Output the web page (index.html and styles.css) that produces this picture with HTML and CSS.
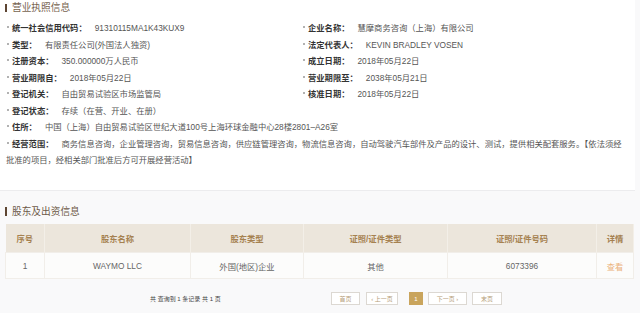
FILE: index.html
```html
<!DOCTYPE html>
<html>

<head>
    <meta charset="utf-8">
    <link rel="stylesheet" href="styles.css">
</head>

<body>
    <div class="panel license">
        <h2 class="section-title">营业执照信息</h2>
        <div class="info-grid">
            <div class="item"><span class="label">统一社会信用代码：</span><span class="value">91310115MA1K43KUX9</span></div>
            <div class="item"><span class="label">企业名称：</span><span class="value">慧摩商务咨询（上海）有限公司</span></div>
            <div class="item"><span class="label">类型：</span><span class="value">有限责任公司(外国法人独资)</span></div>
            <div class="item"><span class="label">法定代表人：</span><span class="value">KEVIN BRADLEY VOSEN</span></div>
            <div class="item"><span class="label">注册资本：</span><span class="value">350.000000万人民币</span></div>
            <div class="item"><span class="label">成立日期：</span><span class="value">2018年05月22日</span></div>
            <div class="item"><span class="label">营业期限自：</span><span class="value">2018年05月22日</span></div>
            <div class="item"><span class="label">营业期限至：</span><span class="value">2038年05月21日</span></div>
            <div class="item"><span class="label">登记机关：</span><span class="value">自由贸易试验区市场监管局</span></div>
            <div class="item"><span class="label">核准日期：</span><span class="value">2018年05月22日</span></div>
            <div class="item wide"><span class="label">登记状态：</span><span class="value">存续（在营、开业、在册）</span></div>
            <div class="item wide"><span class="label">住所：</span><span class="value">中国（上海）自由贸易试验区世纪大道100号上海环球金融中心28楼2801–A26室</span></div>
            <div class="item wide"><span class="label">经营范围：</span><span class="value">商务信息咨询，企业管理咨询，贸易信息咨询，供应链管理咨询，物流信息咨询，自动驾驶汽车部件及产品的设计、测试，提供相关配套服务。【依法须经批准的项目，经相关部门批准后方可开展经营活动】</span></div>
        </div>
    </div>

    <div class="holders">
        <h2 class="section-title">股东及出资信息</h2>
        <table>
            <colgroup>
                <col class="c-no">
                <col class="c-name">
                <col class="c-type">
                <col class="c-cert">
                <col class="c-num">
                <col class="c-more">
            </colgroup>
            <tr>
                <th>序号</th>
                <th>股东名称</th>
                <th>股东类型</th>
                <th>证照/证件类型</th>
                <th>证照/证件号码</th>
                <th>详情</th>
            </tr>
            <tr>
                <td>1</td>
                <td>WAYMO LLC</td>
                <td>外国(地区)企业</td>
                <td>其他</td>
                <td>6073396</td>
                <td><a href="#" class="more">查看</a></td>
            </tr>
        </table>

        <div class="pager-bar">
            <span class="total">共 查询到 1 条记录 共 1 页</span>
            <div class="pager">
                <span class="page-btn first">首页</span>
                <span class="page-btn prev">‹ 上一页</span>
                <span class="page-btn current">1</span>
                <span class="page-btn next">下一页 ›</span>
                <span class="page-btn last">末页</span>
            </div>
        </div>
    </div>
</body>

</html>
```

FILE: styles.css
```css
body {
    font-family: "Liberation Sans", "Noto Sans CJK SC", sans-serif;
    margin: 0;
    padding: 0;
    background-color: #f9f9fa;
    width: 640px;
    height: 313px;
    overflow: hidden;
}

.panel {
    background-color: #fff;
    box-sizing: border-box;
}

.license {
    width: 635px;
    height: 191px;
    padding: 0 6px 0 6px;
    border-bottom: 1px solid #ececee;
}

.section-title {
    display: flex;
    align-items: center;
    margin: 0;
    font-size: 9.7px;
    font-weight: normal;
    line-height: 16px;
    color: #76634f;
}

.section-title::before {
    content: "";
    width: 2px;
    height: 8px;
    background-color: #5d4532;
    margin: 0 5px 0 -1px;
}

.info-grid {
    display: grid;
    grid-template-columns: 296px 1fr;
    margin-top: 4px;
    font-size: 8.3px;
    line-height: 16.5px;
}

.item::before {
    content: "";
    display: inline-block;
    width: 2px;
    height: 2px;
    border-radius: 50%;
    background-color: #999;
    margin: 0 3px 0 1px;
    vertical-align: 3px;
}

.item.wide {
    grid-column: 1 / 3;
}

.label {
    font-weight: bold;
    color: #333;
    margin-right: 8px;
}

.value {
    color: #555;
}

/* 股东及出资信息 */

.holders {
    padding-top: 12px;
}

.holders .section-title {
    line-height: 17px;
    color: #6d5a48;
    padding-left: 6px;
}

.holders .section-title::before {
    height: 9px;
}

table {
    width: 628px;
    margin: 4px 0 0 5px;
    border-collapse: collapse;
    table-layout: fixed;
    font-size: 8.3px;
}

.c-no { width: 39px; }
.c-name { width: 146px; }
.c-type { width: 113px; }
.c-cert { width: 144px; }
.c-num { width: 149px; }
.c-more { width: 37px; }

th {
    height: 28px;
    padding: 0;
    background-color: #ece6dc;
    color: #a58150;
    font-weight: bold;
    border-right: 1px solid #f3efe8;
}

td {
    height: 25px;
    padding: 0;
    text-align: center;
    background-color: #fcfcfb;
    color: #666;
    border: 1px solid #f1eee9;
}

a.more {
    color: #ebb27c;
    text-decoration: none;
}

.pager-bar {
    display: flex;
    align-items: center;
    height: 15px;
    margin-top: 12px;
    padding-left: 150px;
}

.total {
    width: 181px;
    font-size: 6px;
    color: #444;
    white-space: nowrap;
}

.pager {
    display: flex;
    align-items: center;
}

.page-btn {
    display: flex;
    justify-content: center;
    align-items: center;
    box-sizing: border-box;
    height: 13px;
    font-size: 6px;
    color: #b59d78;
    background-color: #fff;
    border: 1px solid #dcd8d2;
    white-space: nowrap;
}

.first { width: 29px; }
.prev { width: 32px; margin-left: 6px; }
.current {
    width: 14px;
    margin-left: 11px;
    background-color: #c9a45c;
    border-color: #c9a45c;
    color: #fff;
}
.next { width: 39px; margin-left: 5px; }
.last { width: 30px; margin-left: 5px; }
```
